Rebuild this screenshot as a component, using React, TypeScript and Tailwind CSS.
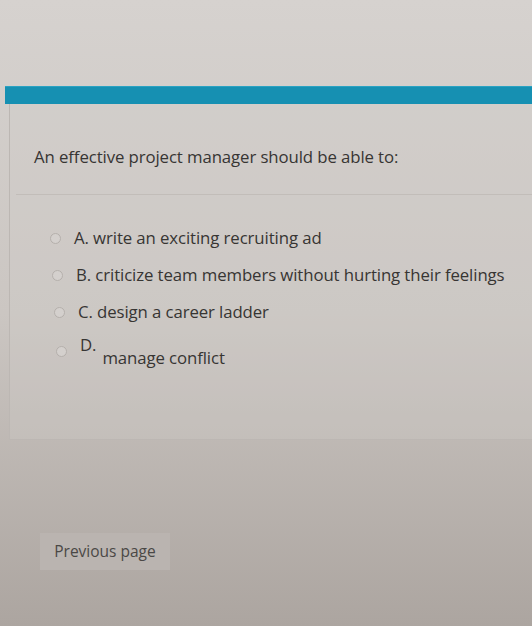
import React from "react";

const Radio = () => (
  <span className="inline-block w-[11px] h-[11px] rounded-full border border-[#b5b0ac] bg-[#d4d0cd] shrink-0" />
);

export default function App() {
  const font = { fontFamily: '"Open Sans", "Liberation Sans", sans-serif' };
  return (
    <div
      className="w-[532px] h-[626px] overflow-hidden bg-gradient-to-b from-[#d6d2cf] via-[#cbc6c2] to-[#aca5a0] pt-[86px] text-[#373533]"
      style={font}
    >
      <div className="ml-[5px] h-[18px] bg-[#1690b2] border-t border-[#2aa2c2]" />
      <div className="ml-[9px] h-[336px] border-l border-b border-[#bcb7b3] bg-[#d0ccc9]/30">
        <div className="pl-[24px] pt-[42px] text-[16.8px] leading-[22px] font-medium tracking-[-0.1px]">
          An effective project manager should be able to:
        </div>
        <div className="ml-[6px] mt-[26px] h-px bg-[#c2bdb9]" />
        <div className="pl-[40px] pt-[32px] flex flex-col gap-[15px] text-[16.8px] leading-[22px] font-medium tracking-[-0.1px]">
          <div className="flex items-center gap-[13px]">
            <Radio />
            <span>A. write an exciting recruiting ad</span>
          </div>
          <div className="flex items-center gap-[13px] pl-[2px]">
            <Radio />
            <span>B. criticize team members without hurting their feelings</span>
          </div>
          <div className="flex items-center gap-[13px] pl-[4px]">
            <Radio />
            <span>C. design a career ladder</span>
          </div>
          <div className="flex items-start gap-[13px] pl-[6px] -mt-[4px]">
            <span className="mt-[6px]">
              <Radio />
            </span>
            <span>D.</span>
            <span className="-ml-[7px] mt-[13px]">manage conflict</span>
          </div>
        </div>
      </div>
      <div className="ml-[40px] mt-[93px] w-[130px] h-[37px] bg-[#bab4b0] flex items-center justify-center text-[15.5px] font-medium text-[#4a4846]">
        Previous page
      </div>
    </div>
  );
}
